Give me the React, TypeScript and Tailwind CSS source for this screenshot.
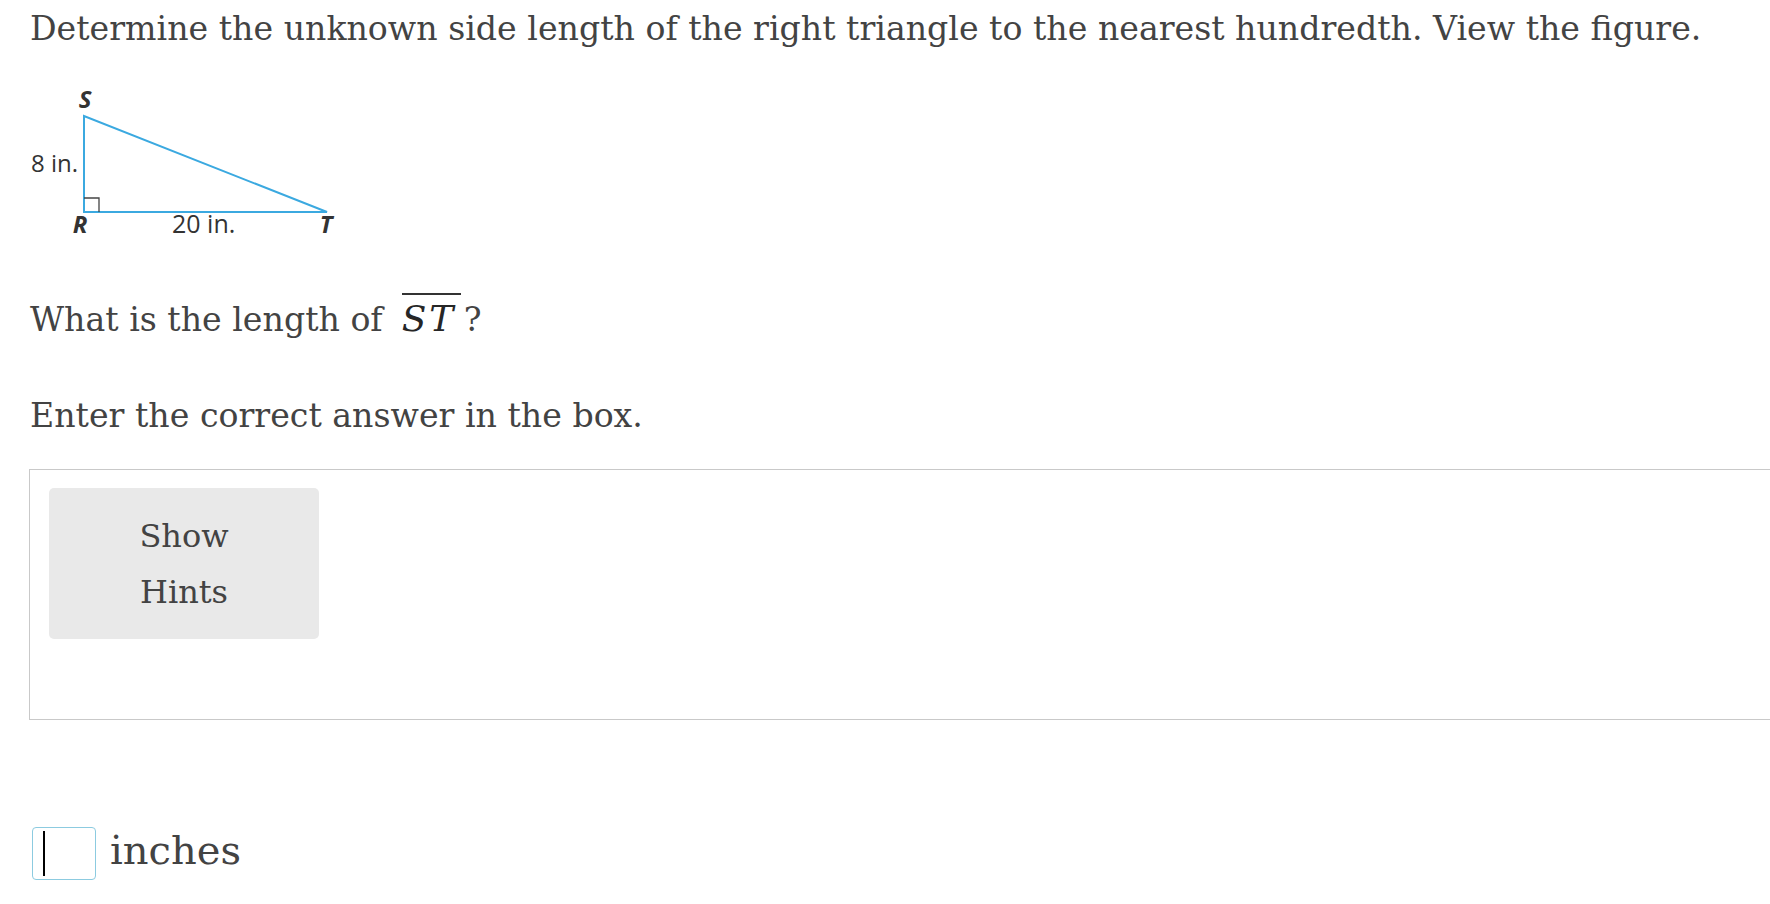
import React from "react";

const serif = { fontFamily: '"DejaVu Serif", "Liberation Serif", serif' };

function Figure() {
  const blue = "#3ba9e0";
  return (
    <svg width="360" height="200" viewBox="0 0 360 200" className="block">
      <polygon points="84,63 84,159 327,159" fill="none" stroke={blue} strokeWidth="2" strokeLinejoin="miter" />
      <polyline points="84,145 99,145 99,159" fill="none" stroke="#444" strokeWidth="1.3" />
      <g fontFamily='"Open Sans", "Noto Sans", sans-serif' fill="#333">
        <text x="85" y="55" fontSize="24" fontWeight="700" fontStyle="italic" textAnchor="middle">S</text>
        <text x="78" y="119" fontSize="24" textAnchor="end">8 in.</text>
        <text x="80" y="180" fontSize="24" fontWeight="700" fontStyle="italic" textAnchor="middle">R</text>
        <text x="172" y="180" fontSize="25">20 in.</text>
        <text x="326" y="180" fontSize="24" fontWeight="700" fontStyle="italic" textAnchor="middle">T</text>
      </g>
    </svg>
  );
}

export default function App() {
  return (
    <div className="w-[1770px] h-[904px] overflow-hidden bg-white text-[#434343]" style={serif}>
      <div className="pt-[5px] pl-[30px] text-[33.2px] leading-[48px] whitespace-nowrap">
        Determine the unknown side length of the right triangle to the nearest hundredth. View the figure.
      </div>
      <Figure />
      <div className="mt-[42px] pl-[30px] text-[33.2px] leading-[48px] whitespace-nowrap">
        What is the length of
        <span className="relative ml-[19px] inline-block w-[59px] italic text-[36px] leading-[48px] tracking-[0.08em] text-[#262626]">
          <span className="absolute left-0 right-0 top-[-2px] h-[1.5px] bg-[#333]"></span>
          ST
        </span>
        <span className="ml-[3px]">?</span>
      </div>
      <div className="mt-[48px] pl-[30px] text-[33.2px] leading-[48px] whitespace-nowrap">
        Enter the correct answer in the box.
      </div>
      <div className="mt-[29px] ml-[29px] w-[1800px] h-[251px] border border-[#c9c9c9] pl-[19px] pt-[18px]">
        <div className="w-[270px] h-[151px] rounded-[5px] bg-[#e9e9e9] pt-[20px] text-center text-[32px] leading-[56px] text-[#434343]">
          <div>Show</div>
          <div>Hints</div>
        </div>
      </div>
      <div className="mt-[107px] ml-[32px] flex items-center gap-[14px]">
        <div className="w-[64px] h-[53px] rounded-[4px] border border-[#8ccbe0] pl-[10px] py-[3px] bg-white">
          <div className="w-[2px] h-full bg-black"></div>
        </div>
        <div className="text-[40px] leading-[53px] text-[#434343] -mt-[6px]">inches</div>
      </div>
    </div>
  );
}
